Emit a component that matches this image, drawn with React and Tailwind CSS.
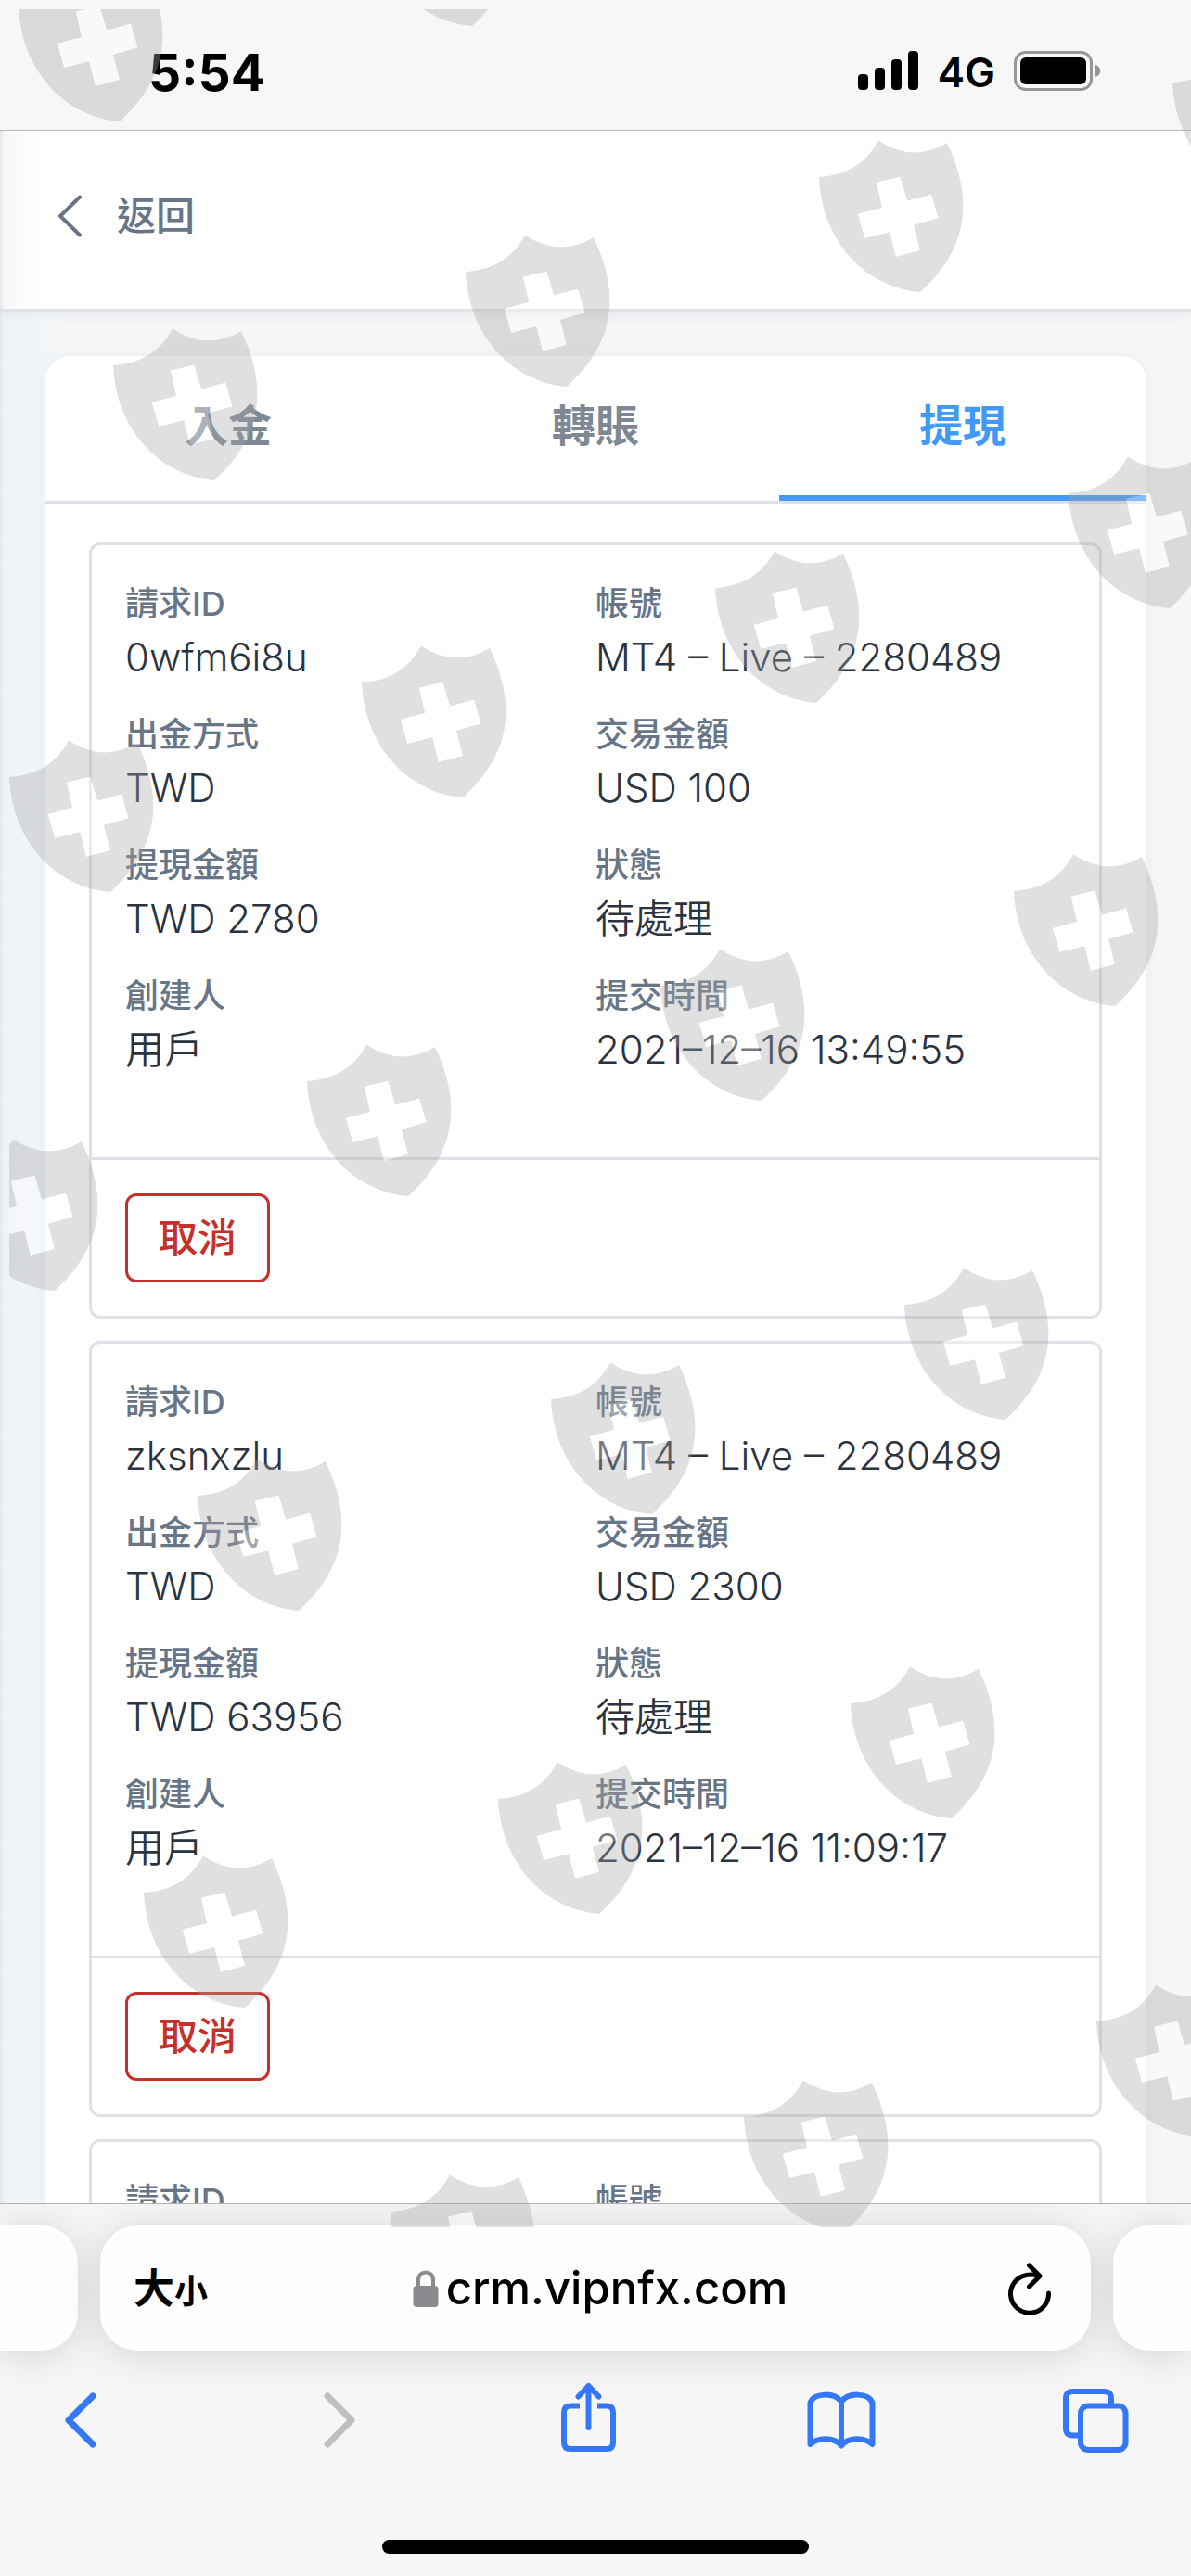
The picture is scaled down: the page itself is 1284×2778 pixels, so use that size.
const tabs = ['入金', '轉賬', '提現'];

const requests = [
    {
        id: '0wfm6i8u',
        fields: [
            ['請求ID', '0wfm6i8u'],
            ['帳號', 'MT4 – Live – 2280489'],
            ['出金方式', 'TWD'],
            ['交易金額', 'USD 100'],
            ['提現金額', 'TWD 2780'],
            ['狀態', '待處理'],
            ['創建人', '用戶'],
            ['提交時間', '2021–12–16 13:49:55'],
        ],
    },
    {
        id: 'zksnxzlu',
        fields: [
            ['請求ID', 'zksnxzlu'],
            ['帳號', 'MT4 – Live – 2280489'],
            ['出金方式', 'TWD'],
            ['交易金額', 'USD 2300'],
            ['提現金額', 'TWD 63956'],
            ['狀態', '待處理'],
            ['創建人', '用戶'],
            ['提交時間', '2021–12–16 11:09:17'],
        ],
    },
    {
        id: 'next',
        fields: [
            ['請求ID', ''],
            ['帳號', ''],
        ],
    },
];

// top left corner of every shield
const shields = [
    [390, -146], [10, -43],
    [1254, 39], [873, 141], [492, 243], [112, 344],
    [1142, 482], [761, 584], [380, 686], [0, 788],
    [1083, 911], [702, 1013], [321, 1116], [-60, 1218],
    [965, 1357], [584, 1459], [203, 1563],
    [907, 1787], [527, 1890], [145, 1991],
    [1172, 2130], [792, 2233], [411, 2335],
];

const Watermark = () => {
    return (
        <svg className="absolute left-[10px] top-[10px] w-[calc(100%-10px)] h-[2392px] overflow-hidden pointer-events-none" opacity="0.35" aria-hidden="true">
            <defs>
                <g id="shield">
                    <path fill="#a7a7a7" fillRule="evenodd" d="M0 40C30 38 50 26 64 0.5Q101 25 138 3C160 50 171 108 109 164L104 163.500C50 157 3 110 0 40ZM62 45.700L87.300 39.700L95 65.700L121 58.700L128.300 84.300L101.700 91.700L108.700 118.700L83 125.700L76.300 99L49.300 105.700L42 80L68.300 73Z" />
                    <path fill="#ffffff" d="M62 45.700L87.300 39.700L95 65.700L121 58.700L128.300 84.300L101.700 91.700L108.700 118.700L83 125.700L76.300 99L49.300 105.700L42 80L68.300 73Z" />
                </g>
            </defs>
            {shields.map(([x, y]) => (
                <use key={`${x},${y}`} href="#shield" x={x} y={y} />
            ))}
        </svg>
    );
}

const StatusBar = () => {
    return (
        <div className="flex shrink-0 h-[141px] items-center justify-between pl-[160px] pr-[97px] pb-[12px] pt-6 border-b border-[#b9b9bb] bg-[#f7f7f7] text-black">
            <span className="pt-1 text-[55px] leading-[60px] font-bold">5:54</span>

            {/* signal, network & battery */}
            <div className="flex items-center">
                <svg width="66" height="42" viewBox="0 0 66 42" fill="currentColor">
                    <rect x="0" y="25" width="11" height="17" rx="4" />
                    <rect x="18" y="18" width="11" height="24" rx="4" />
                    <rect x="36" y="9" width="11" height="33" rx="4" />
                    <rect x="54" y="0" width="11" height="42" rx="4" />
                </svg>
                <span className="ml-5 pt-1 text-[44px] leading-[48px] font-semibold">4G</span>
                <svg className="ml-5" width="94" height="43" viewBox="0 0 94 43">
                    <rect x="1.500" y="1.500" width="82" height="40" rx="11" fill="none" stroke="#979797" strokeWidth="3" />
                    <rect x="7" y="7" width="71" height="29" rx="6" />
                    <path d="M88 15C95 17 95 26 88 28Z" fill="#979797" />
                </svg>
            </div>
        </div>
    );
}

const Field = ({ label, value }) => {
    return (
        <div className="mb-[26px]">
            <dt className="text-[36px] leading-[54px] font-medium text-[#687586]">{label}</dt>
            <dd className="min-h-[61px] text-[42px] leading-[61px] font-[350] text-[#2b333f]">{value}</dd>
        </div>
    );
}

const RequestCard = ({ request }) => {
    return (
        <article className="rounded-xl border-3 border-[#e0e0e8]">
            <dl className="grid grid-cols-2 px-9 pt-9 pb-[60px]">
                {request.fields.map(([label, value]) => (
                    <Field key={label} label={label} value={value} />
                ))}
            </dl>
            <div className="flex border-t-3 border-[#e0e0e8] p-9">
                <button className="h-24 px-[33px] rounded-xl border-3 border-[#c5302b] text-[42px] leading-[60px] font-medium text-[#c5302b]">取消</button>
            </div>
        </article>
    );
}

const BrowserBar = () => {
    return (
        <footer className="shrink-0 border-t border-[#b3b3b5] bg-[#f6f6f6] pt-[23px] pb-6 overflow-hidden">
            {/* address bar, with the edges of the neighbouring tabs */}
            <div className="flex gap-6">
                <div className="w-[84px] h-[135px] rounded-r-[40px] bg-[#fefefe] shadow-[0_4px_44px_rgba(0,0,0,0.14)]"></div>
                <div className="flex flex-1 h-[135px] items-center justify-between pl-9 pr-[42px] rounded-[40px] bg-[#fefefe] shadow-[0_4px_44px_rgba(0,0,0,0.14)] text-black">
                    <button className="flex w-20 pt-1 items-baseline font-bold">
                        <span className="text-[44px] leading-[60px]">大</span>
                        <span className="text-[36px] leading-[60px]">小</span>
                    </button>
                    <div className="flex items-center gap-2">
                        <svg width="28" height="40" viewBox="0 0 28 40">
                            <path d="M6 20V11C6 -0.500 22 -0.500 22 11V20" fill="none" stroke="#8a8a8f" strokeWidth="4" />
                            <rect x="0.500" y="17" width="27" height="23" rx="4" fill="#8a8a8f" />
                        </svg>
                        <span className="text-[49px] leading-[60px] font-medium">crm.vipnfx.com</span>
                    </div>
                    <button aria-label="重新載入" className="flex w-16 justify-end">
                        <svg width="48" height="56" viewBox="0 0 48 56" fill="none" stroke="currentColor" strokeWidth="5" strokeLinecap="round" strokeLinejoin="round">
                            <path d="M34 14.500C29 13 25 12.500 20.500 13.500A20.500 20.500 0 1 0 44.500 33" />
                            <path d="M23.500 3L35 14.500L23.500 26" />
                        </svg>
                    </button>
                </div>
                <div className="w-[84px] h-[135px] rounded-l-[40px] bg-[#fefefe] shadow-[0_4px_44px_rgba(0,0,0,0.14)]"></div>
            </div>

            {/* toolbar */}
            <nav className="flex justify-between pt-[34px] pl-[50px] pr-[67px] text-[#3478f6]">
                <button aria-label="上一頁">
                    <svg width="72" height="76" viewBox="0 0 72 76" fill="none" stroke="currentColor" strokeWidth="7" strokeLinecap="round" strokeLinejoin="round">
                        <path d="M50 15L24 41L50 67" />
                    </svg>
                </button>
                <button aria-label="下一頁" className="text-[#bfbfc0]">
                    <svg width="72" height="76" viewBox="0 0 72 76" fill="none" stroke="currentColor" strokeWidth="7" strokeLinecap="round" strokeLinejoin="round">
                        <path d="M30 15L56 41L30 67" />
                    </svg>
                </button>
                <button aria-label="分享">
                    <svg width="72" height="76" viewBox="0 0 72 76" fill="none" stroke="currentColor" strokeWidth="6">
                        <path d="M28 25.500H18Q11 25.500 11 32.500V65Q11 72 18 72H57Q64 72 64 65V32.500Q64 25.500 57 25.500H47" />
                        <path d="M37.500 49V4M26.500 15.500L37.500 4L48.500 15.500" strokeLinecap="round" strokeLinejoin="round" />
                    </svg>
                </button>
                <button aria-label="書籤">
                    <svg width="74" height="76" viewBox="0 0 74 76" fill="none" stroke="currentColor" strokeWidth="6" strokeLinecap="round" strokeLinejoin="round">
                        <path d="M37 21C30 11 8 11 3.500 22V67C12 59 30 59 37 68.500C44 59 62 59 70.500 67V22C66 11 44 11 37 21ZM37 21V68" />
                    </svg>
                </button>
                <button aria-label="分頁">
                    <svg width="72" height="76" viewBox="0 0 72 76" fill="none" stroke="currentColor" strokeWidth="6">
                        <path d="M19 57.500H12Q4 57.500 4 49.500V18Q4 10 12 10H45Q53 10 53 18V25" />
                        <rect x="20" y="25.500" width="48.500" height="47.500" rx="8" />
                    </svg>
                </button>
            </nav>

            <div className="mx-auto mt-[94px] w-[460px] h-[15px] rounded-full bg-black"></div>
        </footer>
    );
}

const App = () => {
    return (
        <div className="relative flex flex-col h-screen overflow-hidden bg-white font-['Inter','Noto_Sans_CJK_TC',sans-serif]">
            <StatusBar />

            {/* back link */}
            <header className="relative z-10 flex shrink-0 h-[195px] items-center pl-[62px] pb-2 border-b-3 border-[#e2e2e6] bg-[linear-gradient(to_right,#e6eaf1_3px,#f7f7f8_3px,#ffffff_44px)] shadow-[0_4px_10px_rgba(208,214,222,0.4)]">
                <a href="#back" className="flex items-center text-[#687586]">
                    <svg width="28" height="46" viewBox="0 0 28 46" fill="none" stroke="currentColor" strokeWidth="4" strokeLinecap="round" strokeLinejoin="round">
                        <path d="M24 2.500L3 23L24 43.500" />
                    </svg>
                    <span className="ml-9 text-[42px] leading-[60px] font-medium">返回</span>
                </a>
            </header>

            <main className="flex-1 min-h-0 overflow-hidden px-12 pt-12 bg-[linear-gradient(to_right,#e6eaee_2px,#eff3f7_4px,#f3f6f8_46px,#f6f6f7_80px)]">
                <section className="rounded-[28px] bg-white shadow-[0_0_14px_rgba(220,230,240,0.5)]">
                    <div role="tablist" className="flex h-[159px] border-b-3 border-[#e0e0e8]">
                        {tabs.map((tab) => (
                            <button
                                key={tab} role="tab" aria-selected={tab === '提現'}
                                className={`flex-1 border-b-6 text-[47px] leading-[60px] font-bold ${tab === '提現' ? 'border-[#4299f8] text-[#4299f8]' : 'border-transparent text-[#7e8894]'}`}
                            >
                                {tab}
                            </button>
                        ))}
                    </div>

                    <div className="flex flex-col gap-6 px-12 py-[42px]">
                        {requests.map((request) => (
                            <RequestCard key={request.id} request={request} />
                        ))}
                    </div>
                </section>
            </main>

            <BrowserBar />
            <div className="absolute inset-0 z-20 pointer-events-none">
                <Watermark />
            </div>
        </div>
    );
}

export default App;
